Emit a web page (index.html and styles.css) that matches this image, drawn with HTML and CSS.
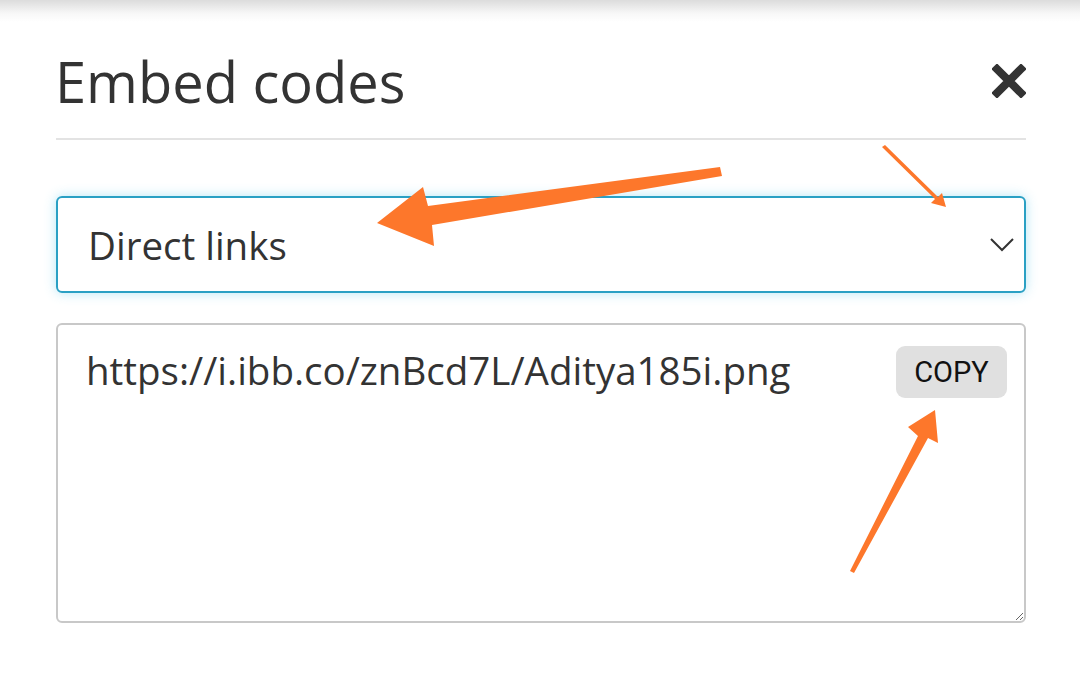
FILE: index.html
```html
<!DOCTYPE html>
<html lang="en">
<head>
  <meta charset="UTF-8" />
  <meta name="viewport" content="width=device-width, initial-scale=1" />
  <title>Embed codes</title>
  <link rel="stylesheet" href="styles.css">
</head>
<body>

  <div class="top-shade"></div>

  <div class="modal">
    <div class="modal-header">
      <h1>Embed codes</h1>
      <button class="close-btn" aria-label="Close">
        <svg width="34" height="34" viewBox="0 0 34 34">
          <path d="M5 5 L29 29 M29 5 L5 29" stroke="#333" stroke-width="8" stroke-linecap="square" fill="none"/>
        </svg>
      </button>
    </div>

    <!-- Selector de tipo -->
    <div class="select-box">
      <span class="select-value">Direct links</span>
      <svg class="chevron" width="24" height="14" viewBox="0 0 24 14">
        <path d="M1 1 L12 12 L23 1" stroke="#333" stroke-width="2" fill="none"/>
      </svg>
    </div>

    <div class="code-box">
      <textarea class="code-text" readonly>https://i.ibb.co/znBcd7L/Aditya185i.png</textarea>
      <button class="copy-btn">COPY</button>
    </div>
  </div>

  <!-- Flechas de anotación -->
  <svg class="annotations" width="1080" height="690" viewBox="0 0 1080 690">
    <polygon fill="#fd772b" points="720,167 722,176 432,225 434,246 377,223 423,187 428,206"/>
    <polygon fill="#fd772b" points="882,147 885,145 938,197 942,193 946,207 931,203 935,199"/>
    <polygon fill="#fd772b" points="850,571 854,573 928,438 938,443 935,410 908,427 918,436"/>
  </svg>

</body>
</html>
```

FILE: styles.css
```css
/* Reset básico */
* {
  box-sizing: border-box;
  margin: 0; padding: 0;
}

body {
  background: #fff;
  color: #333;
  font-family: "Open Sans", Arial, sans-serif;
  width: 1080px;
  height: 690px;
  overflow: hidden;
  position: relative;
}

/* Sombra de la barra superior */
.top-shade {
  height: 22px;
  background: linear-gradient(#dcdcdc, #f7f7f7 60%, #fff);
}

.modal {
  padding: 21px 54px 0 56px;
}

/* Cabecera */
.modal-header {
  display: flex;
  justify-content: space-between;
  align-items: center;
  padding-bottom: 19px;
  border-bottom: 2px solid #e3e3e3;
}

.modal-header h1 {
  font-size: 56px;
  line-height: 76px;
  font-weight: 400;
  color: #333;
  margin-left: -1px;
}

.close-btn {
  background: transparent;
  border: none;
  width: 34px;
  height: 34px;
  display: flex;
  cursor: pointer;
}

/* Select */
.select-box {
  margin-top: 56px;
  height: 97px;
  border: 2px solid #2aa0c4;
  border-radius: 6px;
  box-shadow: 0 0 12px rgba(90, 200, 235, 0.45);
  display: flex;
  align-items: center;
  justify-content: space-between;
  padding: 0 10px 0 30px;
}

.select-value {
  font-size: 38.5px;
  line-height: 52px;
  color: #333;
}

/* Caja de código */
.code-box {
  margin-top: 30px;
  position: relative;
}

.code-text {
  display: block;
  width: 100%;
  height: 300px;
  border: 2px solid #c8c8c8;
  border-radius: 6px;
  padding: 19px 28px;
  font-family: "Open Sans", Arial, sans-serif;
  font-size: 38.5px;
  line-height: 52px;
  color: #333;
  resize: vertical;
  outline: none;
}

.copy-btn {
  position: absolute;
  top: 23px;
  right: 19px;
  width: 111px;
  height: 52px;
  border: none;
  border-radius: 9px;
  background: #e0e0e0;
  color: #111;
  font-family: Roboto, Arial, sans-serif;
  font-size: 29px;
  cursor: pointer;
}

/* Flechas */
.annotations {
  position: absolute;
  top: 0; left: 0;
  pointer-events: none;
}
```
